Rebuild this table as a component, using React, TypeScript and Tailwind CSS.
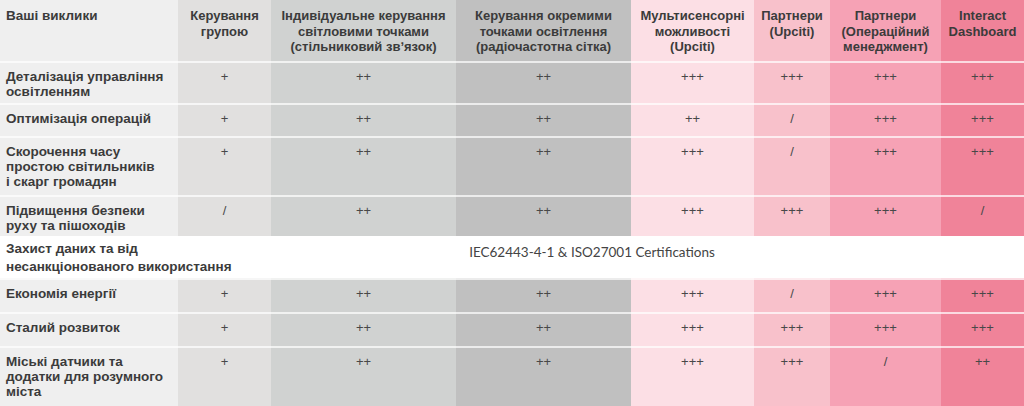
import React from 'react';

const colBg = [
  'bg-[#efefef]',
  'bg-[#e1e0df]',
  'bg-[#d0d2d1]',
  'bg-[#c0c0c0]',
  'bg-[#fcdfe5]',
  'bg-[#f8c1cb]',
  'bg-[#f6a2b5]',
  'bg-[#f08399]',
];

const headerLines = [
  ['Керування', 'групою'],
  ['Індивідуальне керування', 'світловими точками', '(стільниковий зв\u02bcязок)'],
  ['Керування окремими', 'точками освітлення', '(радіочастотна сітка)'],
  ['Мультисенсорні', 'можливості', '(Upciti)'],
  ['Партнери', '(Upciti)'],
  ['Партнери', '(Операційний', 'менеджмент)'],
  ['Interact', 'Dashboard'],
];

interface Row {
  label: string[];
  values: string[];
  height: string;
}

const rows: Row[] = [
  { label: ['Деталізація управління', 'освітленням'], values: ['+', '++', '++', '+++', '+++', '+++', '+++'], height: 'h-[42px]' },
  { label: ['Оптимізація операцій'], values: ['+', '++', '++', '++', '/', '+++', '+++'], height: 'h-[33px]' },
  { label: ['Скорочення часу', 'простою світильників', 'і скарг громадян'], values: ['+', '++', '++', '+++', '/', '+++', '+++'], height: 'h-[59px]' },
  { label: ['Підвищення безпеки', 'руху та пішоходів'], values: ['/', '++', '++', '+++', '+++', '+++', '/'], height: 'h-[41px]' },
];

const rowsAfter: Row[] = [
  { label: ['Економія енергії'], values: ['+', '++', '++', '+++', '/', '+++', '+++'], height: 'h-[34px]' },
  { label: ['Сталий розвиток'], values: ['+', '++', '++', '+++', '+++', '+++', '+++'], height: 'h-[34px]' },
  { label: ['Міські датчики та', 'додатки для розумного', 'міста'], values: ['+', '++', '++', '+++', '+++', '/', '++'], height: 'h-[60px]' },
];

const cols = 'grid grid-cols-[178px_93px_185px_175px_123px_76px_111px_83px]';

const DataRow = ({ row }: { row: Row }) => (
  <div className={`${cols} ${row.height}`}>
    <div className={`${colBg[0]} border-t-2 border-white/70 pl-[6px] pt-[6px] text-[13.5px] font-bold leading-[15px] text-[#3b3b3b] whitespace-nowrap`}>
      {row.label.map((l) => (
        <div key={l}>{l}</div>
      ))}
    </div>
    {row.values.map((v, i) => (
      <div
        key={i}
        className={`${colBg[i + 1]} border-t-2 border-white/70 pt-[6px] text-center text-[13px] leading-[15px] text-[#484848]`}
      >
        {v}
      </div>
    ))}
  </div>
);

export default function App() {
  return (
    <div className="w-[1024px] h-[406px] overflow-hidden bg-white font-['Liberation_Sans',Arial,sans-serif]">
      <div className={`${cols} h-[61px]`}>
        <div className={`${colBg[0]} pl-[6px] pt-[8px] text-[13.5px] font-bold leading-[15px] text-[#3b3b3b]`}>
          Ваші виклики
        </div>
        {headerLines.map((lines, i) => (
          <div
            key={lines.join(' ')}
            className={`${colBg[i + 1]} pt-[8px] text-center text-[13px] font-bold leading-[15.5px] text-[#3b3b3b] whitespace-nowrap`}
          >
            {lines.map((l) => (
              <div key={l}>{l}</div>
            ))}
          </div>
        ))}
      </div>

      {rows.map((r) => (
        <DataRow key={r.label[0]} row={r} />
      ))}

      <div className="grid grid-cols-[178px_846px] h-[42px] bg-white">
        <div className="pl-[6px] pt-[4px] text-[13.5px] font-bold leading-[18px] text-[#3b3b3b] whitespace-nowrap">
          <div>Захист даних та від</div>
          <div>несанкціонованого використання</div>
        </div>
        <div className="pt-[8px] pr-[18px] text-center text-[13.5px] leading-[16px] text-[#444] font-['Lato',sans-serif]">
          IEC62443-4-1 &amp; ISO27001 Certifications
        </div>
      </div>

      {rowsAfter.map((r) => (
        <DataRow key={r.label[0]} row={r} />
      ))}
    </div>
  );
}
